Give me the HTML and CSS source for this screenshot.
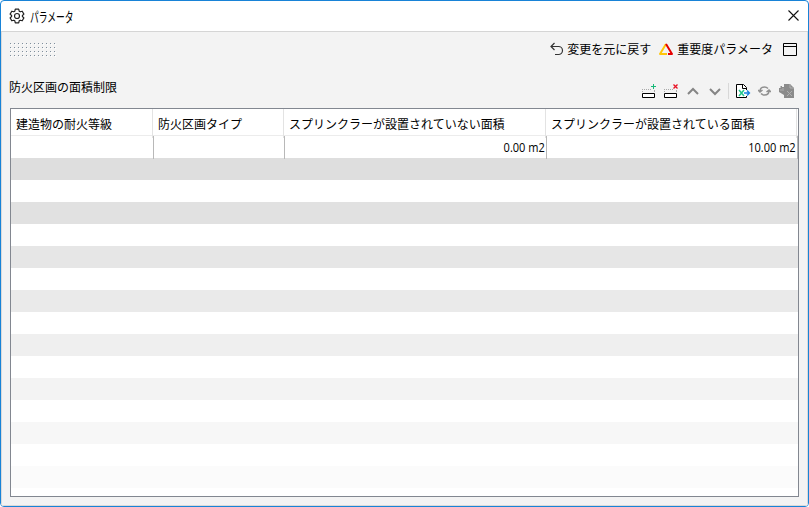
FILE: index.html
```html
<!DOCTYPE html>
<html lang="ja">
<head>
<meta charset="utf-8">
<title>パラメータ</title>
<link rel="stylesheet" href="styles.css">
</head>
<body>
<div class="window">
  <header class="titlebar">
    <svg class="gear" width="16" height="16" viewBox="0 0 16 16" fill="none" stroke="#222" stroke-width="1.2" stroke-linejoin="round"><path d="M6.3 1.2h3.4l.5 2 1 .6 2-.6 1.7 2.9-1.5 1.4v1l1.5 1.4-1.7 2.9-2-.6-1 .6-.5 2H6.3l-.5-2-1-.6-2 .6-1.7-2.9 1.5-1.4v-1L1.1 6.1l1.7-2.9 2 .6 1-.6z"/><circle cx="8" cy="8" r="2.5"/></svg>
    <span class="title">パラメータ</span>
    <svg class="close" width="11" height="11" viewBox="0 0 11 11" stroke="#111" stroke-width="1.1"><path d="M.5.5l10 10M10.5.5l-10 10"/></svg>
  </header>
  <main class="content">
    <div class="commands">
      <svg class="grip" width="48" height="14" shape-rendering="crispEdges">
        <defs><pattern id="dots" width="4" height="4" patternUnits="userSpaceOnUse"><path d="M1 1h1v1H1z" fill="#fff"/><path d="M0 0h1v1H0z" fill="#7f8e9c"/></pattern></defs>
        <rect width="48" height="14" fill="url(#dots)"/>
      </svg>
      <svg class="undo" width="14" height="14" viewBox="0 0 14 14" fill="none" stroke="#333" stroke-width="1.2"><path d="M4.5 1L1 4.5 4.5 8M1 4.5h7.5a4 4 0 0 1 0 8H5"/></svg>
      <span class="undo-label">変更を元に戻す</span>
      <svg class="weight" width="14" height="12" viewBox="0 0 14 12" fill="none" stroke-width="2" stroke-linejoin="round"><path d="M7 1L1 11h7" stroke="#ffc60a"/><path d="M7 1l6 10H9" stroke="#e60000"/></svg>
      <span>重要度パラメータ</span>
      <svg class="panel" width="14" height="13" viewBox="0 0 14 13" fill="none" stroke="#000"><path d="M.5.5h13v12H.5zM0 3.5h14"/></svg>
    </div>
    <div class="section">
      <span class="section-title">防火区画の面積制限</span>
      <div class="tools">
        <svg width="15" height="16" viewBox="0 0 15 16" fill="none"><path d="M0 6.5h9" stroke="#aaa" stroke-dasharray="1 1"/><path d="M.5 8v1M12.5 7v2" stroke="#aaa"/><path d="M.5 10.500h12v4H.5z" stroke="#000" fill="#fff"/><path d="M11.5 1v5M9 3.5h5" stroke="#16b978"/></svg>
        <svg width="15" height="16" viewBox="0 0 15 16" fill="none"><path d="M0 6.5h9" stroke="#aaa" stroke-dasharray="1 1"/><path d="M.5 8v1M12.5 7v2" stroke="#aaa"/><path d="M.5 10.500h12v4H.5z" stroke="#000" fill="#fff"/><path d="M9.5 1.500l4 4M13.500 1.500l-4 4" stroke="#e81123" stroke-width="1.3"/></svg>
        <svg width="12" height="16" viewBox="0 0 12 16" fill="none" stroke="#858585" stroke-width="2"><path d="M1 11l5-5 5 5"/></svg>
        <svg width="12" height="16" viewBox="0 0 12 16" fill="none" stroke="#858585" stroke-width="2"><path d="M1 6l5 5 5-5"/></svg>
        <i class="divider"></i>
        <svg width="15" height="16" viewBox="0 0 15 16" fill="none"><path d="M10.5 7V4.500l-3-3h-7v13h10V13M6.500 1.500v4h4" stroke="#000" fill="#fff"/><path d="M3 7l5 6M8 7l-5 6" stroke="#20c58a" stroke-width="1.5"/><path d="M8 10h5.500M11 7.500l2.500 2.500-2.500 2.500" stroke="#1683e0" stroke-width="1.3"/></svg>
        <svg class="refresh" width="13" height="16" viewBox="0 0 13 16" fill="none" stroke="#909090" stroke-width="1.5"><path d="M2 8.500Q2 4 6.500 4 8.500 4 10 5.500M0 7l2 2 2.500-2M11 7.500Q11 12 6.500 12 4.500 12 3 10.500M8.500 9L11 7l2 2"/></svg>
        <svg class="excel" width="15" height="16" viewBox="0 0 15 16"><path d="M5 1h6l4 4v10H5v-3L0 9V5h1.500V3H3v1h2z" fill="#8b8b8b"/><path d="M11 1v4h4M8 8l5 5M13 8l-5 5M2 6v2M4 5v3" fill="none" stroke="#b0b0b0"/></svg>
      </div>
    </div>
    <div class="table">
      <div class="row head"><span>建造物の耐火等級</span><span>防火区画タイプ</span><span>スプリンクラーが設置されていない面積</span><span>スプリンクラーが設置されている面積</span></div>
      <div class="row values"><span></span><span></span><span><b>0.00 m2</b></span><span><b>10.00 m2</b></span></div>
      <div class="stripe s1"></div><div class="stripe"></div>
      <div class="stripe s2"></div><div class="stripe"></div>
      <div class="stripe s3"></div><div class="stripe"></div>
      <div class="stripe s4"></div><div class="stripe"></div>
      <div class="stripe s5"></div><div class="stripe"></div>
      <div class="stripe s6"></div><div class="stripe"></div>
      <div class="stripe s7"></div><div class="stripe"></div>
      <div class="stripe s8"></div>
    </div>
  </main>
</div>
</body>
</html>
```
FILE: styles.css
```css
* { box-sizing: border-box; }
body {
  margin: 0;
  background: #fff;
  color: #000;
  font: 12px/16px "Noto Sans CJK JP", sans-serif;
}
svg { display: block; flex: none; }
span { white-space: nowrap; }
.window {
  width: 809px;
  height: 507px;
  border: 1px solid #1883d7;
  border-radius: 4px;
  overflow: hidden;
  display: flex;
  flex-direction: column;
}
.titlebar {
  height: 31px;
  flex: none;
  border-bottom: 1px solid #d5d5d5;
  display: flex;
  align-items: center;
  padding: 0 9px 1px 8px;
}
.title {
  margin-left: 5px;
  width: 60px;
  transform: scale(.73, 1.1);
  transform-origin: left;
}
.close { margin-left: auto; }
.content {
  flex: 1;
  background: #f3f3f3;
  border: 1px solid #dadada;
  border-top: 0;
  padding: 0 8px 8px;
  display: flex;
  flex-direction: column;
}
.commands {
  height: 34px;
  display: flex;
  align-items: center;
  padding-right: 2px;
}
.grip { margin: 2px auto 0 0; }
.undo { margin-right: 3px; }
.undo-label { margin-right: 8px; }
.weight { margin-right: 4px; }
.panel { margin-left: 10px; }
.section {
  height: 42px;
  display: flex;
  justify-content: space-between;
  padding: 13px 5px 0 0;
}
.section-title { margin-left: -1px; }
.tools {
  display: flex;
  gap: 7px;
  padding-top: 4px;
  height: 20px;
}
.tools svg:nth-of-type(3) { margin-left: 1px; }
.tools svg:nth-of-type(4) { margin-left: 3px; }
.divider { width: 1px; height: 16px; background: #d8d8d8; }
.tools .excel { margin-left: 1px; }
.table {
  flex: 1;
  width: 789px;
  border: 1px solid #828790;
  background: #fff;
}
.row { display: grid; }
.head {
  height: 27px;
  grid-template-columns: 142px 131px 262px 251px;
  border-bottom: 1px solid #ececec;
  line-height: 29px;
}
.head span { border-right: 1px solid #e3e3e3; padding-left: 5px; }
.values {
  height: 22px;
  grid-template-columns: 143px 131px 262px 251px;
  line-height: 22px;
  text-align: right;
}
.values span { border-right: 1px solid #b8b8b8; }
.values b {
  display: inline-block;
  margin-right: 1px;
  font: 12px/22px "Open Sans", sans-serif;
  transform: scaleX(.92);
  transform-origin: right;
}
.stripe { height: 22px; }
.s1 { background: #dedede; }
.s2 { background: #e1e1e1; }
.s3 { background: #e6e6e6; }
.s4 { background: #eaeaea; }
.s5 { background: #efefef; }
.s6 { background: #f3f3f3; }
.s7 { background: #f7f7f7; }
.s8 { background: #fbfbfb; }
```
